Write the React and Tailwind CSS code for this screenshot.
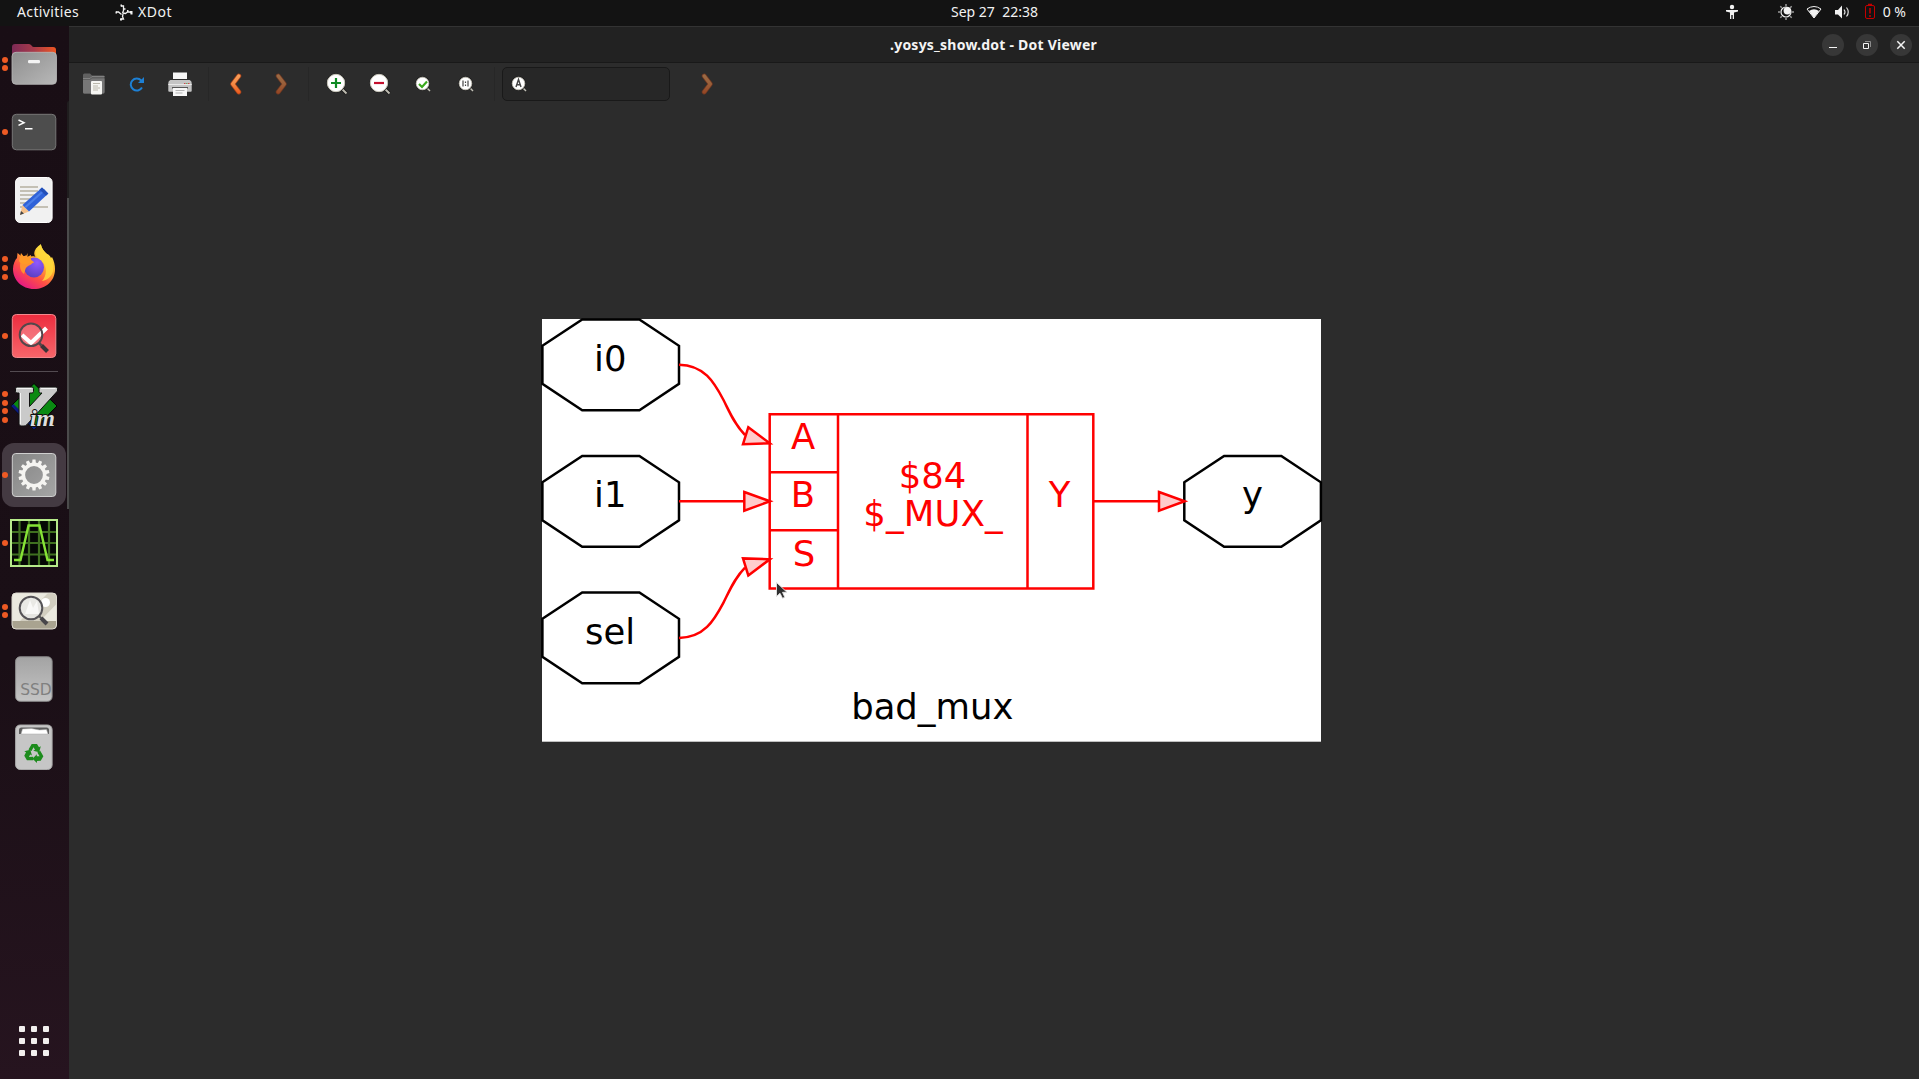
import React from "react";

/* Drawing whose viewBox starts at (x, y) in window coordinates. */
function Art({ x, y, w, h, children }) {
  return (
    <svg width={w} height={h} viewBox={`${x} ${y} ${w} ${h}`} className="block shrink-0" fill="none">
      {children}
    </svg>
  );
}

function DockItem({ dots = 0, active = false, children }) {
  return (
    <div className="relative flex h-[68px] w-[69px] shrink-0 items-center">
      <div className="z-10 ml-[2px] flex w-[6px] flex-col gap-[2.6px]">
        {Array.from({ length: dots }, (_, i) => (
          <span key={i} className="h-[6px] w-[6px] rounded-full bg-[#ee5a24]" />
        ))}
      </div>
      {active && <div className="absolute left-[2px] top-[2px] h-16 w-16 rounded-[12px] bg-[#443a42]" />}
      <div className="z-10 ml-[2px] flex h-12 w-12 items-center justify-center">{children}</div>
    </div>
  );
}

function FilesIcon() {
  return (
    <Art x={10} y={40} w={48} h={48}>
      <defs>
        <linearGradient id="fa" x1="0" x2="1"><stop stopColor="#7d2a56" /><stop offset="0.5" stopColor="#a83a4a" /><stop offset="1" stopColor="#ee5622" /></linearGradient>
        <linearGradient id="fb" x1="0" y1="0" x2="1" y2="1"><stop stopColor="#8e8e8e" /><stop offset="1" stopColor="#b8b8b8" /></linearGradient>
      </defs>
      <path d="M12 58V47q0-3 3-3h14q1.500 0 2.500 1.500T34 47h19q3 0 3 3v8z" fill="url(#fa)" />
      <rect x="12" y="52.300" width="44.500" height="32" rx="4" fill="url(#fb)" stroke="#b9b9b9" strokeWidth="0.800" />
      <rect x="28" y="60" width="12" height="3.300" rx="1.200" fill="#f4f4f4" />
    </Art>
  );
}

function TerminalIcon() {
  return (
    <Art x={10} y={108} w={48} h={48}>
      <rect x="12.300" y="114.300" width="43.500" height="35.500" rx="4" fill="#4d4d4d" stroke="#777" />
      <path d="M18.500 120l5.500 2.700-5.500 2.700M25 128.800h7.500" stroke="#fff" strokeWidth="1.500" />
    </Art>
  );
}

function EditorIcon() {
  return (
    <Art x={10} y={176} w={48} h={48}>
      <rect x="15.600" y="177.500" width="36.500" height="45" rx="4.500" fill="#f1f1f1" stroke="#fff" />
      <path d="M20 187h18M20 191h18M20 195h17M20 199h16M20 203h13M20 207h28" stroke="#c4c0b4" strokeWidth="2" />
      <path d="M20 215l2.500-10L29 211.500z" fill="#f5c08a" />
      <path d="M20 215l1-4 3 2.500z" fill="#444" />
      <path d="M22.500 205l19.500-17.500 6.300 6L29 211.500z" fill="#2f62d8" />
      <path d="M24.500 206.500l19.500-17.500 1.500 1.500L26 208z" fill="#4a7ee8" />
      <path d="M42 187.500l6.300 6-2.300 2.200-6.400-6z" fill="#2450b8" />
    </Art>
  );
}

function FirefoxIcon() {
  return (
    <Art x={10} y={244} w={48} h={48}>
      <defs>
        <linearGradient id="xa" x1="0.850" y1="0.100" x2="0.250" y2="1"><stop stopColor="#fff04a" /><stop offset="0.350" stopColor="#ffb02c" /><stop offset="0.650" stopColor="#ff4f45" /><stop offset="1" stopColor="#e3158a" /></linearGradient>
        <radialGradient id="xb" cx="0.650" cy="0.250" r="0.800"><stop stopColor="#9059ff" /><stop offset="1" stopColor="#5a3fc0" /></radialGradient>
      </defs>
      <path d="M41 245c1 4 3 6 6 9 2 .500 3 2 4 4l1-1c2 4 3 8 3 12 0 12-9 20-21 20s-21-9-21-20c0-5 2-9 4-11l.500-5c2 1 3 3 4 4 2-1 4-1.500 5-1.500l1-2.500v5c3-2 7-2 8-1-3-4-.500-9 5.500-13z" fill="url(#xa)" />
      <path d="M41 245c1 4 3 6 6 9 5 5 7 11 6 17-1 5-5 9-11 10 5-5 6-16-2-21-6-4-5-11 1-15z" fill="#ffd93b" opacity="0.850" />
      <circle cx="34" cy="267.500" r="10" fill="url(#xb)" />
      <path d="M21 260c3-2 8-2 12 2-1 3-4 3-6 5-2 1-2 5-3 7-4-3-5-8-3-14z" fill="#ff9130" />
      <path d="M19 261l2-8 4 5 6-3v5c2 1 3 2 3 3-4-1-7 2-10 1-2 0-4-1-5-3z" fill="#ff9a28" />
    </Art>
  );
}

function ReviewIcon() {
  return (
    <Art x={10} y={312} w={48} h={48}>
      <defs><linearGradient id="ra" x2="0" y2="1"><stop stopColor="#ec2d3f" /><stop offset="1" stopColor="#f7656a" /></linearGradient></defs>
      <rect x="12.300" y="314.500" width="43.500" height="43" rx="4" fill="url(#ra)" stroke="#f3898d" />
      <circle cx="31" cy="334.700" r="11.300" fill="#fff" fillOpacity="0.220" />
      <path d="M22 335l9 8 15.500-15" stroke="#fff" strokeWidth="4.200" />
      <circle cx="31" cy="334.700" r="11.300" stroke="#53474b" strokeWidth="2" />
      <path d="M39 343l2.500 2.500" stroke="#53474b" strokeWidth="2.500" />
      <path d="M41.500 345.500l6 6" stroke="#3b3538" strokeWidth="4" />
    </Art>
  );
}

function VimIcon() {
  return (
    <Art x={10} y={383} w={48} h={48}>
      <path d="M34 383.500l23 22.500-23 23.500-23-23.500z" fill="#0a8a12" stroke="#000" />
      <path d="M11 406l23 23.500 2.500-2.500-23-23z" fill="#0b1a80" />
      <path d="M17 387h15q1.500 0 1.500 1.500v3q0 1.500-1.500 1.500h-2.500v13.500l12.500-13.500h-1.500q-1.500 0-1.500-1.500v-3q0-1.500 1.500-1.500H56q1.500 0 1.500 1.500v2.500L27 424.500q-1 1.500-3 1.500h-3q-2 0-2-2V393h-2q-1.500 0-1.500-1.500v-3q0-1.500 1.500-1.500z" fill="#cacaca" stroke="#111" strokeWidth="1" />
      <path d="M17 388.500h14.500M20.500 393v31M41 388.500h14.500" stroke="#f4f4f4" />
      <text x="30" y="426" fontFamily="Liberation Serif, serif" fontSize="24" fontStyle="italic" fontWeight="bold" fill="#dedede" stroke="#111" strokeWidth="2" paintOrder="stroke" textLength="25" lengthAdjust="spacingAndGlyphs">im</text>
    </Art>
  );
}

function SettingsIcon() {
  return (
    <Art x={10} y={451} w={48} h={48}>
      <defs><linearGradient id="sa" x2="1" y2="1"><stop stopColor="#858585" /><stop offset="1" stopColor="#a5a5a5" /></linearGradient></defs>
      <rect x="12.300" y="453.500" width="43.500" height="43" rx="3.500" fill="url(#sa)" stroke="#cfcfcf" />
      <circle cx="34" cy="475" r="10.700" stroke="#f5f4f1" strokeWidth="3.600" />
      {Array.from({ length: 14 }, (_, i) => (
        <path key={i} d="M32 464l.500-4.500h3l.500 4.500z" fill="#f5f4f1" transform={`rotate(${(i * 360) / 14} 34 475)`} />
      ))}
    </Art>
  );
}

function WaveIcon() {
  return (
    <Art x={10} y={519} w={48} h={48}>
      <rect x="11" y="520" width="46" height="46" fill="#050805" stroke="#b6ea8a" strokeWidth="2" />
      <path d="M19.500 521v44M29 521v44M39 521v44M49 521v44M12 532h44M12 543h44M12 554.500h44" stroke="#3f7020" strokeWidth="2.200" />
      <path d="M14 560h6.500l8-34.500h11l8 34.500H54" stroke="#86e336" strokeWidth="2.400" />
    </Art>
  );
}

function ViewerIcon() {
  return (
    <Art x={10} y={587} w={48} h={48}>
      <rect x="12" y="593" width="44.500" height="36" rx="4" fill="#ebe9df" />
      <path d="M20 621l28-28h5q3.500 0 3.500 4v7L40 621z" fill="#d2cec0" />
      <path d="M12 621h44.500v4q0 4-4 4H16q-4 0-4-4z" fill="#a9a390" />
      <rect x="12" y="593" width="44.500" height="36" rx="4" stroke="#dedbd1" />
      <circle cx="45.500" cy="602.500" r="4.500" fill="#fff" />
      <circle cx="31" cy="608" r="11.300" fill="#e9e9e6" fillOpacity="0.850" stroke="#555357" strokeWidth="2" />
      <path d="M25 614l5-14 3 8 4-7 2 13z" fill="#fff" opacity="0.700" />
      <path d="M39 616l3 3" stroke="#555" strokeWidth="2" />
      <path d="M41 618l6 6" stroke="#48464a" strokeWidth="4" />
    </Art>
  );
}

function SsdIcon() {
  return (
    <Art x={10} y={655} w={48} h={48}>
      <defs><linearGradient id="da" x2="0" y2="1"><stop stopColor="#a3a3a3" /><stop offset="1" stopColor="#c4c4c4" /></linearGradient></defs>
      <rect x="15.600" y="656.800" width="36.500" height="44.500" rx="4.500" fill="url(#da)" stroke="#8b8b8b" />
      <text x="20.300" y="695.300" fontFamily="DejaVu Sans, sans-serif" fontSize="15.500" fill="#808080" textLength="31.500">SSD</text>
    </Art>
  );
}

function TrashIcon() {
  return (
    <Art x={10} y={723} w={48} h={48}>
      <rect x="15.600" y="725" width="36.500" height="44.500" rx="4.500" fill="#c6c6c6" stroke="#a9a9a9" />
      <path d="M19 734v-4q0-2.500 2.500-2.500h25q2.500 0 2.500 2.500v4z" fill="#5c5c5c" />
      <path d="M21 734l1.500-5 9-.500 8 1.500 7-.500 1.500 4.500z" fill="#fff" stroke="#aaa" strokeWidth="0.500" />
      <g fill="#1d8c1d">
        {[0, 120, 240].map((a) => (
          <g key={a} transform={`rotate(${a} 34 753.500)`}>
            <path d="M28.500 749.500l3.200-5.500h5.300l2 3.200 1.800-1-1.600 6-6-1.500 1.800-1-1.500-2.400-2 3.800z" />
          </g>
        ))}
      </g>
    </Art>
  );
}

function Dock() {
  return (
    <aside className="relative flex w-[69px] shrink-0 flex-col bg-gradient-to-b from-[#190e15] via-[#1a0f16] via-60% to-[#26141f] pt-1">
      <DockItem dots={2}><FilesIcon /></DockItem>
      <DockItem dots={1}><TerminalIcon /></DockItem>
      <DockItem><EditorIcon /></DockItem>
      <DockItem dots={3}><FirefoxIcon /></DockItem>
      <DockItem dots={1}><ReviewIcon /></DockItem>
      <div className="flex h-[3px] w-[69px] items-center pl-[10px]"><div className="h-px w-12 bg-[#534b51]" /></div>
      <DockItem dots={4}><VimIcon /></DockItem>
      <DockItem dots={1} active><SettingsIcon /></DockItem>
      <DockItem dots={1}><WaveIcon /></DockItem>
      <DockItem dots={2}><ViewerIcon /></DockItem>
      <DockItem><SsdIcon /></DockItem>
      <DockItem><TrashIcon /></DockItem>
      <div className="mb-[23px] ml-[19px] mt-auto grid w-[30px] grid-cols-3 gap-[6px]">
        {Array.from({ length: 9 }, (_, i) => (
          <span key={i} className="h-[6px] w-[6px] rounded-[1px] bg-[#f2efee]" />
        ))}
      </div>
      <div className="absolute left-[67px] top-[75px] h-[97px] w-[2px] rounded-tl-sm bg-[#1f1d1e]" />
      <div className="absolute left-[67px] top-[172px] h-[311px] w-[2px] bg-[#4b4b4b]" />
    </aside>
  );
}

function TopBar() {
  return (
    <header className="flex h-[26px] shrink-0 items-center bg-[#131313] text-[14px] leading-[24px] text-[#f2f2f2]">
      <div className="w-[115px] pb-[2px] pl-[17px] tracking-[0.370px]">Activities</div>
      <Art x={115} y={3} w={18} h={18}>
        <path d="M121 5h2.500v4.500l-1 2.500M116 11h2.500l3 2.500M122.500 12l3 .500 2-1.500h2l2.500 1.500M123 13l-.500 2.500 1 2.500h-3M123.500 8h2" stroke="#f2f2f2" strokeWidth="1.300" />
        <path d="M120.500 4.500h1.500M115.500 11.500h1.500M130 11h1.500v2.500M127 10h1.500M120 18.500h2" stroke="#f2f2f2" strokeWidth="2" />
      </Art>
      <div className="ml-[5px] w-[813px] pb-[2px] tracking-[0.500px]">XDot</div>
      <div className="whitespace-pre pb-[2px]">Sep 27  22:38</div>
      <div className="ml-auto flex items-center pr-[13px]">
        <Art x={1720} y={0} w={160} h={26}>
          <g fill="#f2f2f2">
            <circle cx="1732" cy="7" r="2.200" />
            <path d="M1726 10h12v1.500l-4 1V19h-1.300v-4h-1.400v4H1730v-6.500l-4-1z" />
            <circle cx="1787.300" cy="10.800" r="3.700" />
          </g>
          <circle cx="1786" cy="12" r="5" stroke="#f2f2f2" strokeWidth="1.200" />
          <path d="M1786 4v2M1786 18v2M1778 12h2M1792 12h2M1780.300 6.300l1.500 1.500M1790.200 16.200l1.500 1.500M1780.300 17.700l1.500-1.500M1790.200 7.800l1.500-1.500" stroke="#999" strokeWidth="1.500" />
          <path d="M1807 9q7-5 14 0l-7 9z" stroke="#f2f2f2" />
          <path d="M1809 11q5-3.500 10 0l-5 7z" fill="#f2f2f2" />
          <path d="M1835 10h3l4-4.500v13l-4-4h-3z" fill="#f2f2f2" />
          <path d="M1844 9.500q2 2.500 0 5M1846.500 7.500q3.500 4.500 0 9" stroke="#ddd" strokeWidth="1.200" />
          <rect x="1865.500" y="5.500" width="9" height="13" rx="1.500" stroke="#c40000" />
          <path d="M1868 4.500h4" stroke="#c40000" strokeWidth="1.500" />
          <path d="M1870 8v5.500M1870 15v2" stroke="#b00000" strokeWidth="1.800" />
        </Art>
        <span className="ml-[3px] pb-[2px]">0 %</span>
      </div>
    </header>
  );
}

function TitleBar() {
  return (
    <div className="flex h-[37px] shrink-0 items-center border-b border-t border-b-[#191919] border-t-[#333] bg-[#222]">
      <div className="flex-1 pl-[96px] pb-px text-center text-[14px] font-bold tracking-[0.230px] text-[#f4f4f4]">.yosys_show.dot - Dot Viewer</div>
      <div className="flex gap-3 pr-[7px]">
        <div className="flex h-[22px] w-[22px] items-center justify-center rounded-full bg-[#373737]">
          <Art x={0} y={0} w={12} h={12}><path d="M2 8.500h8" stroke="#f4f4f4" /></Art>
        </div>
        <div className="flex h-[22px] w-[22px] items-center justify-center rounded-full bg-[#373737]">
          <Art x={0} y={0} w={12} h={12}><path d="M2.500 4.500h5v5h-5z" stroke="#f4f4f4" /><path d="M4 2.500h5.500V8" stroke="#8c8c8c" /></Art>
        </div>
        <div className="flex h-[22px] w-[22px] items-center justify-center rounded-full bg-[#373737]">
          <Art x={0} y={0} w={12} h={12}><path d="M2.300 2.300l7.400 7.400M9.700 2.300L2.300 9.700" stroke="#f4f4f4" strokeWidth="1.500" /></Art>
        </div>
      </div>
    </div>
  );
}

function Chevron({ dir, dim }) {
  return (
    <svg width="14" height="22" viewBox="0 0 14 22" fill="none" opacity={dim ? 0.55 : 1}>
      <defs>
        <linearGradient id={`cg-${dir}`} gradientUnits="userSpaceOnUse" x1="0" y1="0" x2="0" y2="22">
          <stop stopColor="#f7a560" /><stop offset="0.500" stopColor="#f58a45" /><stop offset="1" stopColor="#ea5216" />
        </linearGradient>
      </defs>
      <g transform={dir === "right" ? "translate(14 0) scale(-1 1)" : undefined} strokeLinecap="round" strokeLinejoin="round">
        <path d="M9.800 3L3.700 11l6.100 8" stroke="#a8431a" strokeWidth="4.800" />
        <path d="M9.800 3L3.700 11l6.100 8" stroke={`url(#cg-${dir})`} strokeWidth="3.400" />
      </g>
    </svg>
  );
}

function Lens({ children }) {
  return (
    <svg width="22" height="22" viewBox="0 0 22 22" fill="none">
      <path d="M15 15l5.500 5.500" stroke="#171717" strokeWidth="3.500" />
      <path d="M15 15l5.500 5.500" stroke="#bdbbb0" strokeWidth="2" />
      <circle cx="10" cy="10" r="9.500" fill="#171717" />
      <circle cx="10" cy="10" r="8.700" fill="#fff" stroke="#c9c7bb" />
      {children}
    </svg>
  );
}

function SmallLens({ children }) {
  return (
    <svg width="16" height="16" viewBox="0 0 16 16" fill="none">
      <path d="M11 11l4 4" stroke="#c4c2b8" strokeWidth="1.400" />
      <circle cx="7.500" cy="7.500" r="7.200" fill="#171717" />
      <circle cx="7.500" cy="7.500" r="6.300" fill="#fff" stroke="#c9c7bb" strokeWidth="0.800" />
      {children}
    </svg>
  );
}

const cell = "flex h-[34px] shrink-0 items-center justify-center";

function Toolbar() {
  return (
    <div className="flex h-[42px] shrink-0 items-center">
      <div className={`${cell} w-[50px]`}>
        <Art x={82} y={73} w={24} h={24}>
          <path d="M83 93V76q0-1.500 1.500-1.500H90l2 2h11.500q1 0 1 1V93q0 1.500-1.500 1.500H84.500Q83 94.500 83 93z" fill="#606060" />
          <path d="M83 79.500h7l2-2h12.500" stroke="#8a8a8a" strokeWidth="0.800" />
          <path d="M83 81h7l2-1.500h12.500V93q0 1.500-1.500 1.500H84.500Q83 94.500 83 93z" fill="#777" />
          <rect x="91" y="82" width="11" height="13.500" rx="1" fill="#f5f5f2" />
          <path d="M93 84.500h7M93 87h5M93 89h7M93 91h5" stroke="#bbb8ac" />
        </Art>
      </div>
      <div className={`${cell} w-[36px]`}>
        <Art x={129} y={76} w={16} h={16}>
          <path d="M142 87.500a6 6 0 1 1-.800-7" stroke="#1d80d5" strokeWidth="2" />
          <path d="M144 77v6h-6z" fill="#1d80d5" />
        </Art>
      </div>
      <div className={`${cell} w-[50px]`}>
        <Art x={168} y={72} w={24} h={24}>
          <path d="M168.300 91v-8q0-2 2-3h19.400q2 1 2 3v8q0 .700-1 .700h-21.400q-1 0-1-.700z" fill="#c4c4c4" />
          <path d="M173 72.500h14V79h-14z" fill="#f7f7f7" />
          <path d="M168.300 84.500h23.400" stroke="#e8e8e8" />
          <path d="M184 83.500h1.500M188 83.500h1.500" stroke="#d04848" /><path d="M186 83.500h1.500" stroke="#6a6" />
          <rect x="172" y="87" width="16" height="1.500" fill="#555" />
          <rect x="173" y="88" width="14" height="8" fill="#f7f7f7" />
          <path d="M175.500 90.500h9M175.500 93h7" stroke="#b3b3b3" />
        </Art>
      </div>
      <div className="ml-[3px] h-[34px] w-px bg-[#272727]" />
      <div className={`${cell} w-[53px]`}><Chevron dir="left" /></div>
      <div className={`${cell} w-[38px]`}><Chevron dir="right" dim /></div>
      <div className="ml-[8px] h-[34px] w-px bg-[#272727]" />
      <div className={`${cell} w-[55px]`}>
        <Lens><path d="M10 5v10M5 10h10" stroke="#0f8a24" strokeWidth="2.200" /></Lens>
      </div>
      <div className={`${cell} w-[31px]`}>
        <Lens><path d="M5 10h10" stroke="#c4102e" strokeWidth="2.200" /></Lens>
      </div>
      <div className={`${cell} w-[56px]`}>
        <SmallLens><path d="M4 8l3 3 5-5.500" stroke="#3aa81c" strokeWidth="2.200" /></SmallLens>
      </div>
      <div className={`${cell} w-[30px]`}>
        <SmallLens><path d="M5 4.500v6M10 4.500v6M7.500 5.500v1.500M7.500 8.500v1.500" stroke="#444" strokeWidth="1.200" /></SmallLens>
      </div>
      <div className="ml-[13px] h-[34px] w-px bg-[#272727]" />
      <div className="ml-[7px] flex h-[34px] w-[168px] items-center rounded-[5px] border border-[#191919] bg-[#272727] pl-[8px]">
        <SmallLens><path d="M5 11l2.500-7.500L10 11M5.800 8.700h3.400" stroke="#444" strokeWidth="1.400" /></SmallLens>
      </div>
      <div className={`${cell} ml-[19px] w-[36px]`}><Chevron dir="right" dim /></div>
    </div>
  );
}

const octagon = (x, cy) =>
  `${x},${cy - 19} ${x + 39.8},${cy - 45.4} ${x + 97},${cy - 45.4} ${x + 136.6},${cy - 19} ${x + 136.6},${cy + 19} ${x + 97},${cy + 45.4} ${x + 39.8},${cy + 45.4} ${x},${cy + 19}`;

function Graph() {
  return (
    <Art x={541} y={318} w={782} h={425}>
      <rect x="542" y="319" width="779" height="422.700" fill="#fff" />
      <g stroke="#000" strokeWidth="2.500">
        <polygon points={octagon(542.4, 364.8)} />
        <polygon points={octagon(542.4, 501.3)} />
        <polygon points={octagon(542.4, 637.8)} />
        <polygon points={octagon(1184.3, 501.3)} />
      </g>
      <g stroke="#f00" strokeWidth="2.500">
        <path d="M769.700 414.200h323.600v174.300H769.700zM838 414.200v174.300M1027.500 414.200v174.300M769.700 472.300H838M769.700 530.300H838" />
        <path d="M679 364.700C704 365 714 382 723.500 400C730 413 735 425 745 435" />
        <path d="M679 501.300h65M1093.500 501.300h65" />
        <path d="M679 637.900C704 637.600 714 620.600 723.500 602.600C730 589.600 735 577.600 745 567.600" />
        <g fill="#ffcccc">
          <path d="M748.300 427.200L769.800 443.300L743 444.200z" />
          <path d="M744.300 492L770 501.300L744.300 510.600z" />
          <path d="M748.300 575.400L769.800 559.300L743 558.400z" />
          <path d="M1159 492L1184.700 501.300L1159 510.600z" />
        </g>
      </g>
      <g fontFamily="DejaVu Sans, sans-serif" fontSize="35.400" textAnchor="middle" fill="#000">
        <text x="610.300" y="371">i0</text>
        <text x="610.300" y="507">i1</text>
        <text x="610" y="643.500">sel</text>
        <text x="1252.500" y="507">y</text>
        <text x="932.300" y="718.700">bad_mux</text>
        <g fill="#f00">
          <text x="803" y="449">A</text>
          <text x="803" y="507">B</text>
          <text x="804" y="565.500">S</text>
          <text x="1059.500" y="507">Y</text>
          <text x="932.500" y="488">$84</text>
          <text x="933" y="526" textLength="139.500">$_MUX_</text>
        </g>
      </g>
      <path d="M776.500 582.500v14l3.500-3.200 2.500 5 2.300-1-2.300-5h4.500z" fill="#303030" stroke="#e4e4e4" strokeWidth="0.900" />
    </Art>
  );
}

export default function App() {
  return (
    <div className="flex h-[1079px] w-[1919px] flex-col overflow-hidden bg-[#2c2c2c] font-['Noto_Sans',sans-serif]">
      <TopBar />
      <div className="flex min-h-0 flex-1">
        <Dock />
        <main className="flex min-w-0 flex-1 flex-col">
          <TitleBar />
          <Toolbar />
          <div className="flex-1 pl-[472px] pt-[213px]">
            <Graph />
          </div>
        </main>
      </div>
    </div>
  );
}
